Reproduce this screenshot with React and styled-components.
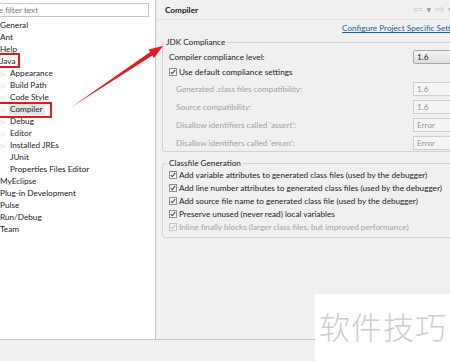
import React from 'react';
import styled, { createGlobalStyle } from 'styled-components';

const GlobalStyle = createGlobalStyle`
  html, body {
    margin: 0;
    padding: 0;
    width: 450px;
    height: 361px;
    overflow: hidden;
    background: #f0f0f0;
  }
  body {
    font-family: Lato, "Liberation Sans", sans-serif;
    font-size: 8.2px;
    color: #1b1b1b;
  }
`;

const Window = styled.div`
  position: relative;
  width: 450px;
  height: 361px;
  display: grid;
  grid-template-columns: 156px 1fr;
  grid-template-rows: 340px 1fr;
  overflow: hidden;
`;

const LeftPanel = styled.div`
  background: #fff;
  border-right: 1px solid #c4c4c4;
  border-bottom: 1px solid #c4c4c4;
  overflow: hidden;
`;

const FilterInput = styled.div`
  margin: 3px 6px 0 -18px;
  height: 14px;
  border: 1px solid #c9c9c9;
  box-sizing: border-box;
  display: flex;
  align-items: center;
  padding-left: 4px;
  color: #7a7a7a;
  white-space: nowrap;
`;

const Tree = styled.div`
  margin-top: 2px;
  display: flex;
  flex-direction: column;
`;

const TreeRow = styled.div`
  height: 12px;
  display: flex;
  align-items: center;
  padding-left: ${(p) => (p.$child ? '2px' : '0')};
  margin-left: -1px;
  white-space: nowrap;
`;

const Twisty = styled.span`
  width: 8px;
  color: #c6c6c6;
  font-size: 6px;
  font-family: "DejaVu Sans", sans-serif;
`;

const Label = styled.span`
  padding: 0 2px 0 1px;
  line-height: 12px;
  background: ${(p) => (p.$selected ? '#e6e6e6' : 'transparent')};
`;

const RightPanel = styled.div`
  border-bottom: 1px solid #c4c4c4;
  overflow: hidden;
  display: flex;
  flex-direction: column;
`;

const Header = styled.div`
  height: 20px;
  border-bottom: 1px solid #e2e2e2;
  box-sizing: border-box;
  display: flex;
  align-items: center;
  justify-content: space-between;
  padding-left: 9px;
`;

const Title = styled.span`
  font-weight: 700;
`;

const Nav = styled.div`
  display: flex;
  gap: 4px;
  margin-right: -3px;
  color: #c2c2c2;
  font-family: "DejaVu Sans", sans-serif;
  font-size: 11px;
`;

const Caret = styled.span`
  font-size: 6px;
  align-self: center;
  color: #9a9a9a;
`;

const LinkRow = styled.div`
  height: 16px;
  display: flex;
  align-items: center;
  padding-left: 186px;
  white-space: nowrap;
`;

const Link = styled.span`
  color: #1a5fb0;
  text-decoration: underline;
`;

const Group = styled.fieldset`
  margin: ${(p) => p.$top}px -24px 0 6px;
  padding: ${(p) => p.$padTop}px 8px ${(p) => p.$padBottom}px 6px;
  border: 1px solid #d3d3d3;
  border-radius: 3px;
  display: flex;
  flex-direction: column;
  min-width: 0;
`;

const Legend = styled.legend`
  margin-left: ${(p) => p.$shift}px;
  padding: 0 2px;
  line-height: 10px;
  white-space: nowrap;
`;

const Row = styled.div`
  height: ${(p) => p.$h || 14}px;
  margin-top: ${(p) => p.$gap || 0}px;
  display: flex;
  align-items: center;
  justify-content: space-between;
  padding-left: ${(p) => (p.$indent ? '7px' : '0')};
  color: ${(p) => (p.$disabled ? '#a3a3a3' : 'inherit')};
  white-space: nowrap;
`;

const Combo = styled.div`
  width: 52px;
  height: 14px;
  box-sizing: border-box;
  border: 1px solid #a9a9a9;
  border-radius: 2px;
  background: linear-gradient(#f4f4f4, #dedede);
  display: flex;
  align-items: center;
  padding-left: 3px;
  color: #222;
`;

const TextBox = styled.div`
  width: 52px;
  height: 14px;
  box-sizing: border-box;
  border: 1px solid #cdcdcd;
  background: #f5f5f5;
  display: flex;
  align-items: center;
  padding-left: 3px;
  color: #939393;
`;

const CheckLine = styled.label`
  display: flex;
  align-items: center;
  gap: 2px;
`;

const Box = styled.span`
  width: 8px;
  height: 8px;
  box-sizing: border-box;
  border: 1px solid ${(p) => (p.$disabled ? '#c4c4c4' : '#8e8f8f')};
  background: linear-gradient(#f0f0f0, #ffffff);
  display: flex;
  align-items: center;
  justify-content: center;
`;

const Footer = styled.div`
  grid-column: 1 / 3;
  background: #f0f0f0;
`;

const Marker = styled.div`
  position: absolute;
  left: ${(p) => p.$x}px;
  top: ${(p) => p.$y}px;
  width: ${(p) => p.$w}px;
  height: ${(p) => p.$h}px;
  border: 2px solid #e01b1b;
  box-sizing: border-box;
  pointer-events: none;
`;

const ArrowLayer = styled.svg`
  position: absolute;
  left: 0;
  top: 0;
  pointer-events: none;
`;

const Watermark = styled.div`
  position: absolute;
  left: 315px;
  top: 294px;
  width: 135px;
  height: 67px;
  background: #fff;
  display: flex;
  align-items: center;
  padding-left: 4px;
  box-sizing: border-box;
  color: #cdcdcd;
  font-family: "Noto Sans CJK SC", sans-serif;
  font-size: 31px;
  font-weight: 300;
  letter-spacing: 1px;
  padding-bottom: 4px;
`;

const Check = ({ disabled }) => (
  <Box $disabled={disabled}>
    <svg width="6" height="6" viewBox="0 0 6 6">
      <path d="M0.8 3.1 L2.3 4.6 L5.2 1.2" fill="none" stroke={disabled ? '#b9bfca' : '#3f4f73'} strokeWidth="1.1" />
    </svg>
  </Box>
);

const treeItems = [
  { label: 'General' },
  { label: 'Ant' },
  { label: 'Help' },
  { label: 'Java' },
  { label: 'Appearance', child: true, twisty: true },
  { label: 'Build Path', child: true, twisty: true },
  { label: 'Code Style', child: true, twisty: true },
  { label: 'Compiler', child: true, twisty: true, selected: true },
  { label: 'Debug', child: true, twisty: true },
  { label: 'Editor', child: true, twisty: true },
  { label: 'Installed JREs', child: true, twisty: true },
  { label: 'JUnit', child: true },
  { label: 'Properties Files Editor', child: true },
  { label: 'MyEclipse' },
  { label: 'Plug-in Development' },
  { label: 'Pulse' },
  { label: 'Run/Debug' },
  { label: 'Team' },
];

const complianceFields = [
  { label: 'Generated .class files compatibility:', value: '1.6' },
  { label: 'Source compatibility:', value: '1.6' },
  { label: "Disallow identifiers called 'assert':", value: 'Error' },
  { label: "Disallow identifiers called 'enum':", value: 'Error' },
];

const classfileOptions = [
  { label: 'Add variable attributes to generated class files (used by the debugger)' },
  { label: 'Add line number attributes to generated class files (used by the debugger)' },
  { label: 'Add source file name to generated class file (used by the debugger)' },
  { label: 'Preserve unused (never read) local variables' },
  { label: 'Inline finally blocks (larger class files, but improved performance)', disabled: true },
];

export default function App() {
  return (
    <>
      <GlobalStyle />
      <Window>
        <LeftPanel>
          <FilterInput>type filter text</FilterInput>
          <Tree>
            {treeItems.map((item) => (
              <TreeRow key={item.label} $child={item.child}>
                {item.child && <Twisty>{item.twisty ? '▷' : ''}</Twisty>}
                <Label $selected={item.selected}>{item.label}</Label>
              </TreeRow>
            ))}
          </Tree>
        </LeftPanel>

        <RightPanel>
          <Header>
            <Title>Compiler</Title>
            <Nav>
              <span>⇦</span>
              <Caret>▼</Caret>
              <span>⇨</span>
              <Caret>▼</Caret>
            </Nav>
          </Header>
          <LinkRow>
            <Link>Configure Project Specific Settings...</Link>
          </LinkRow>

          <Group $top={1} $padTop={3} $padBottom={1}>
            <Legend $shift={-5}>JDK Compliance</Legend>
            <Row>
              <span>Compiler compliance level:</span>
              <Combo>1.6</Combo>
            </Row>
            <Row $gap={1}>
              <CheckLine>
                <Check />
                Use default compliance settings
              </CheckLine>
            </Row>
            {complianceFields.map((f, i) => (
              <Row key={f.label} $gap={i === 0 ? 3 : 4} $indent $disabled>
                <span>{f.label}</span>
                <TextBox>{f.value}</TextBox>
              </Row>
            ))}
          </Group>

          <Group $top={6} $padTop={0} $padBottom={4}>
            <Legend $shift={-2}>Classfile Generation</Legend>
            {classfileOptions.map((o) => (
              <Row key={o.label} $h={13} $disabled={o.disabled}>
                <CheckLine>
                  <Check disabled={o.disabled} />
                  {o.label}
                </CheckLine>
              </Row>
            ))}
          </Group>
        </RightPanel>

        <Footer />

        <Marker $x={-2} $y={53} $w={22} $h={15} />
        <Marker $x={-2} $y={102} $w={54} $h={16} />
        <ArrowLayer width="450" height="361">
          <polygon
            points="70,108 150.2,52 148.5,49.5 163,46 154,57.9 152.4,55.4"
            fill="#e21b1b"
          />
        </ArrowLayer>
        <Watermark>软件技巧</Watermark>
      </Window>
    </>
  );
}
